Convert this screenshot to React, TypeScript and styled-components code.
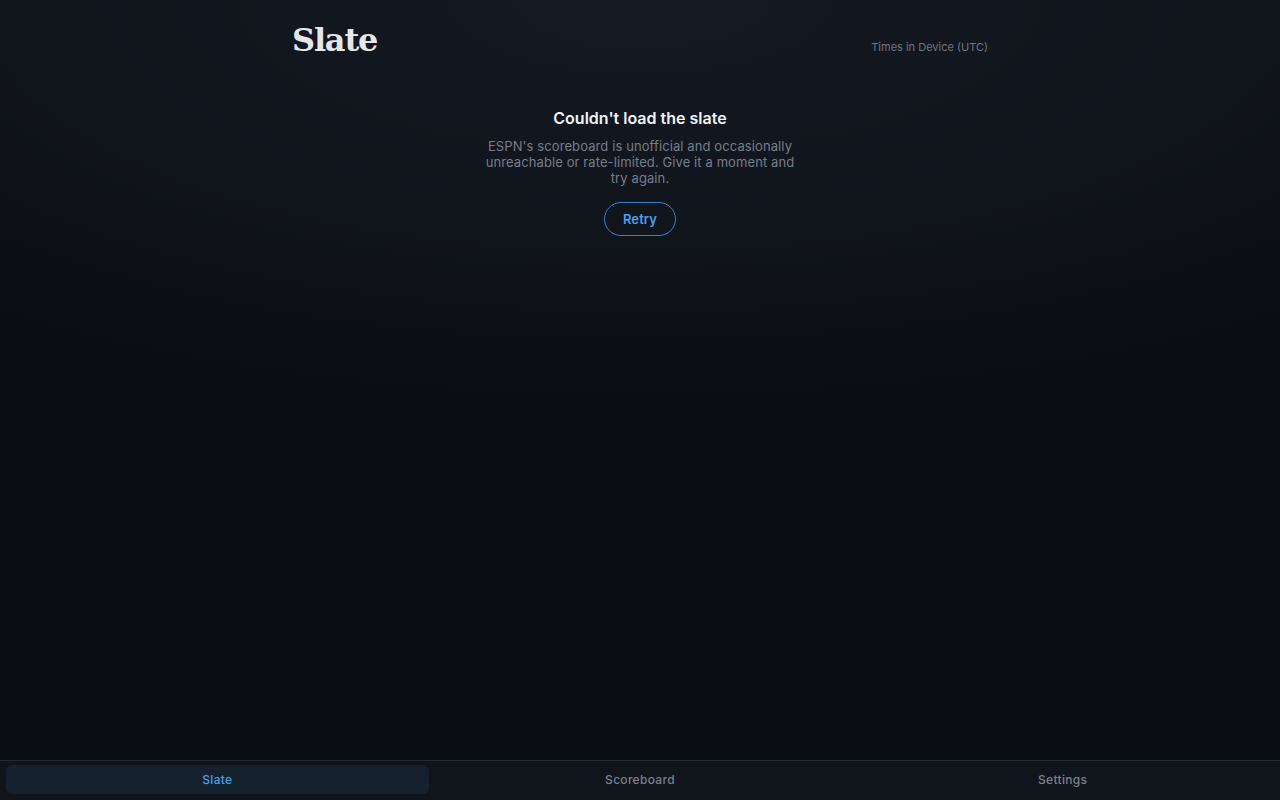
import React from 'react';
import styled, { createGlobalStyle } from 'styled-components';

const GlobalStyle = createGlobalStyle`
  html, body {
    margin: 0;
    padding: 0;
    height: 100%;
    background: #0a0d12;
  }
  #root {
    height: 100%;
  }
  * {
    box-sizing: border-box;
  }
`;

const TABS = ['Slate', 'Scoreboard', 'Settings'];

function App() {
  return (
    <>
      <GlobalStyle />
      <Screen>
        <Main>
          <Header>
            <Title>Slate</Title>
            <TimeZone>Times in Device (UTC)</TimeZone>
          </Header>
          <ErrorBox>
            <ErrorTitle>Couldn't load the slate</ErrorTitle>
            <ErrorText>
              ESPN's scoreboard is unofficial and occasionally unreachable or rate-limited. Give it a
              moment and try again.
            </ErrorText>
            <RetryButton>Retry</RetryButton>
          </ErrorBox>
        </Main>
        <TabBar>
          {TABS.map((tab, i) => (
            <Tab key={tab} active={i === 0}>
              {tab}
            </Tab>
          ))}
        </TabBar>
      </Screen>
    </>
  );
}
export default App;

const Screen = styled.div`
  display: flex;
  flex-direction: column;
  height: 800px;
  background: radial-gradient(ellipse 1100px 420px at 50% 0%, #151a23 0%, #10141b 55%, #0a0d12 100%),
    #0a0d12;
  font-family: Inter, 'Noto Sans', sans-serif;
`;

const Main = styled.main`
  flex: 1;
  width: 696px;
  margin: 0 auto;
  padding-top: 19px;
`;

const Header = styled.header`
  display: flex;
  justify-content: space-between;
  align-items: baseline;
`;

const Title = styled.h1`
  margin: 0;
  font-family: 'DejaVu Serif', 'Liberation Serif', serif;
  font-size: 32px;
  font-weight: 700;
  line-height: 42px;
  letter-spacing: -1.2px;
  color: #e4e6ea;
`;

const TimeZone = styled.span`
  font-size: 11px;
  color: #6f7683;
`;

const ErrorBox = styled.section`
  display: flex;
  flex-direction: column;
  align-items: center;
  margin-top: 47px;
  text-align: center;
`;

const ErrorTitle = styled.h2`
  margin: 0;
  font-size: 16px;
  font-weight: 600;
  line-height: 20px;
  color: #f1f3f5;
`;

const ErrorText = styled.p`
  margin: 10px 0 0;
  width: 324px;
  font-size: 13px;
  line-height: 16px;
  letter-spacing: 0.1px;
  color: #767e8b;
`;

const RetryButton = styled.button`
  margin-top: 16px;
  height: 34px;
  padding: 0 18px;
  border: 1px solid #3a7fd0;
  border-radius: 17px;
  background: transparent;
  color: #4aa0f0;
  font-family: Inter, 'Noto Sans', sans-serif;
  font-size: 13px;
  font-weight: 600;
  letter-spacing: 0.1px;
  cursor: pointer;
`;

const TabBar = styled.nav`
  display: grid;
  grid-template-columns: repeat(3, 1fr);
  height: 40px;
  padding: 4px 6px 6px;
  background: #10141b;
  border-top: 1px solid #262b33;
`;

const Tab = styled.button<{ active?: boolean }>`
  border: none;
  border-radius: 6px;
  background: ${(p) => (p.active ? '#162130' : 'transparent')};
  color: ${(p) => (p.active ? '#4b9fe6' : '#7b828e')};
  font-family: Inter, 'Noto Sans', sans-serif;
  font-size: 12px;
  font-weight: 500;
  letter-spacing: 0.3px;
  cursor: pointer;
`;
